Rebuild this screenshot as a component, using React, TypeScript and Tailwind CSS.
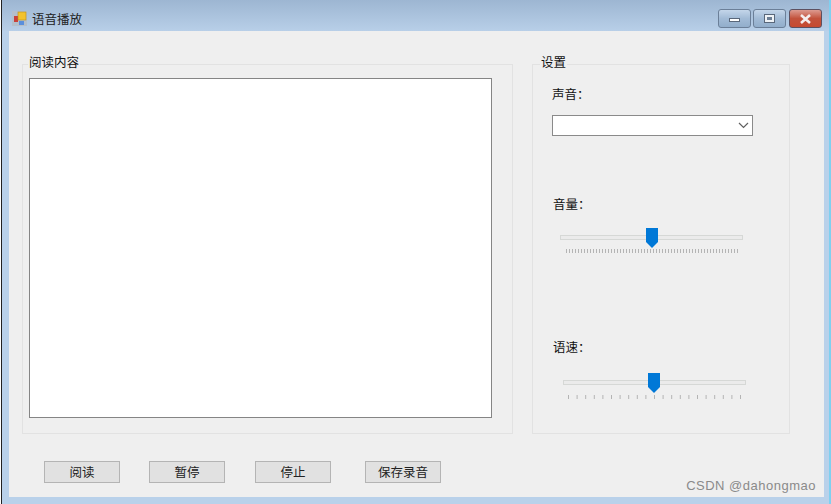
const font = { fontFamily: '"Noto Sans CJK SC", "Liberation Sans", sans-serif' };

function Ticks({ count, width }: { count: number; width: number }) {
  const ticks = Array.from({ length: count }, (_, i) => (i * (width - 1)) / (count - 1));
  return (
    <svg width={width} height="4" className="block">
      {ticks.map((x, i) => (
        <line key={i} x1={x + 0.5} x2={x + 0.5} y1="0" y2="4" stroke="#b4b4b4" strokeWidth="1" />
      ))}
    </svg>
  );
}

function Slider({ count, tickWidth, box, tickBox, thumb }: { count: number; tickWidth: number; box: string; tickBox: string; thumb: string }) {
  return (
    <div className={`relative w-[183px] ${box}`}>
      <div className="h-[5px] border border-[#d6d8d6] bg-[#ebebeb]" />
      <svg width="12" height="20" className={`absolute top-[-7px] ${thumb}`}>
        <path d="M0 0H12V14L6 20L0 14Z" fill="#0078d7" />
      </svg>
      <div className={tickBox}>
        <Ticks count={count} width={tickWidth} />
      </div>
    </div>
  );
}

function Btn({ label, ml }: { label: string; ml: string }) {
  return (
    <button className={`h-[22px] w-[76px] border border-[#b4b4b4] bg-[#e1e1e1] text-[12.5px] leading-[18px] text-[#222] ${ml}`}>
      {label}
    </button>
  );
}

export default function App() {
  return (
    <div style={font} className="relative flex h-[504px] w-[831px] flex-col overflow-hidden bg-[#b9d1ea] text-[12.5px] text-[#111]">
      <div className="flex h-[31px] shrink-0 items-start bg-gradient-to-b from-[#9db6d2] to-[#b8cfe8] pl-[12px] pr-[9px]">
        <svg width="15" height="15" viewBox="0 0 15 15" className="mt-[11px] shrink-0">
          <rect x="0" y="0" width="15" height="15" fill="#b4bfcb" />
          <rect x="2" y="5" width="4" height="6" fill="#c9403a" />
          <rect x="6" y="1" width="8" height="8" fill="#f2c22e" stroke="#b98f1a" strokeWidth="0.6" />
          <rect x="7" y="10" width="5" height="4" fill="#5a8fdc" />
        </svg>
        <span className="ml-[5px] mt-[12px] text-[12.5px] leading-[13px] text-[#222]">语音播放</span>
        <div className="ml-auto mt-[9px] flex gap-[2px]">
          <div className="flex h-[19px] w-[33px] items-center justify-center rounded-[3px] border border-[#6b7f98] bg-gradient-to-b from-[#c4d6ea] via-[#a2bbd6] to-[#92aecb]">
            <div className="mt-[3px] h-[4px] w-[11px] border border-[#59677a] bg-white" />
          </div>
          <div className="flex h-[19px] w-[33px] items-center justify-center rounded-[3px] border border-[#6b7f98] bg-gradient-to-b from-[#c4d6ea] via-[#a2bbd6] to-[#92aecb]">
            <div className="flex h-[9px] w-[11px] items-center justify-center border border-[#59677a] bg-[#eef2f6]">
              <div className="h-[3px] w-[5px] bg-[#6d7f95]" />
            </div>
          </div>
          <div className="ml-[1px] flex h-[19px] w-[33px] items-center justify-center rounded-[3px] border border-[#5d5060] bg-gradient-to-b from-[#dc9a90] via-[#c2523c] to-[#c64a30]">
            <svg width="11" height="10" viewBox="0 0 11 10">
              <path d="M1 1L10 9M10 1L1 9" stroke="#f4eeee" strokeWidth="2.6" />
            </svg>
          </div>
        </div>
      </div>

      <div className="ml-[9px] mr-[7px] flex h-[466px] shrink-0 flex-col bg-[#efefef] pl-[13px]">
        <div className="mt-[33px] flex h-[370px] shrink-0">
          <div className="relative h-full w-[491px] border border-[#e2e2e2] pl-[6px] pt-[13px]">
            <span className="absolute left-[5px] top-[-13px] bg-[#efefef] px-[1px] leading-[20px]">阅读内容</span>
            <div className="h-[340px] w-[463px] border border-[#858585] bg-white" />
          </div>

          <div className="relative ml-[19px] h-full w-[258px] border border-[#e2e2e2] pl-[19px]">
            <span className="absolute left-[7px] top-[-13px] bg-[#efefef] px-[1px] leading-[20px]">设置</span>
            <div className="mt-[19px] leading-[20px]">声音：</div>
            <div className="mt-[11px] flex h-[21px] w-[201px] items-center justify-end border border-[#8a8a8a] bg-white pr-[3px]">
              <svg width="11" height="7" viewBox="0 0 11 7">
                <path d="M1 1L5.5 5.5L10 1" fill="none" stroke="#606060" strokeWidth="1.2" />
              </svg>
            </div>
            <div className="ml-[1px] mt-[58px] leading-[20px]">音量：</div>
            <Slider count={58} tickWidth={172} box="ml-[8px] mt-[21px]" tickBox="ml-[6px] mt-[9px]" thumb="left-[86px]" />
            <div className="ml-[1px] mt-[84px] leading-[20px]">语速：</div>
            <Slider count={21} tickWidth={173} box="ml-[11px] mt-[23px]" tickBox="ml-[5px] mt-[10px]" thumb="left-[85px]" />
          </div>
        </div>

        <div className="mt-[27px] flex items-start">
          <Btn label="阅读" ml="ml-[22px]" />
          <Btn label="暂停" ml="ml-[29px]" />
          <Btn label="停止" ml="ml-[30px]" />
          <Btn label="保存录音" ml="ml-[34px]" />
          <span
            style={{ fontFamily: '"Liberation Sans", sans-serif' }}
            className="ml-auto mr-[8px] mt-[15px] text-[13px] leading-[20px] tracking-[0.5px] text-[#8a8a8a]"
          >
            CSDN @dahongmao
          </span>
        </div>
      </div>

      <div className="absolute bottom-0 left-0 top-0 w-[2px] border-r border-r-[#222] bg-white" />
      <div className="absolute bottom-0 right-0 top-0 w-[2px] bg-[#7fd0f0]" />
    </div>
  );
}
